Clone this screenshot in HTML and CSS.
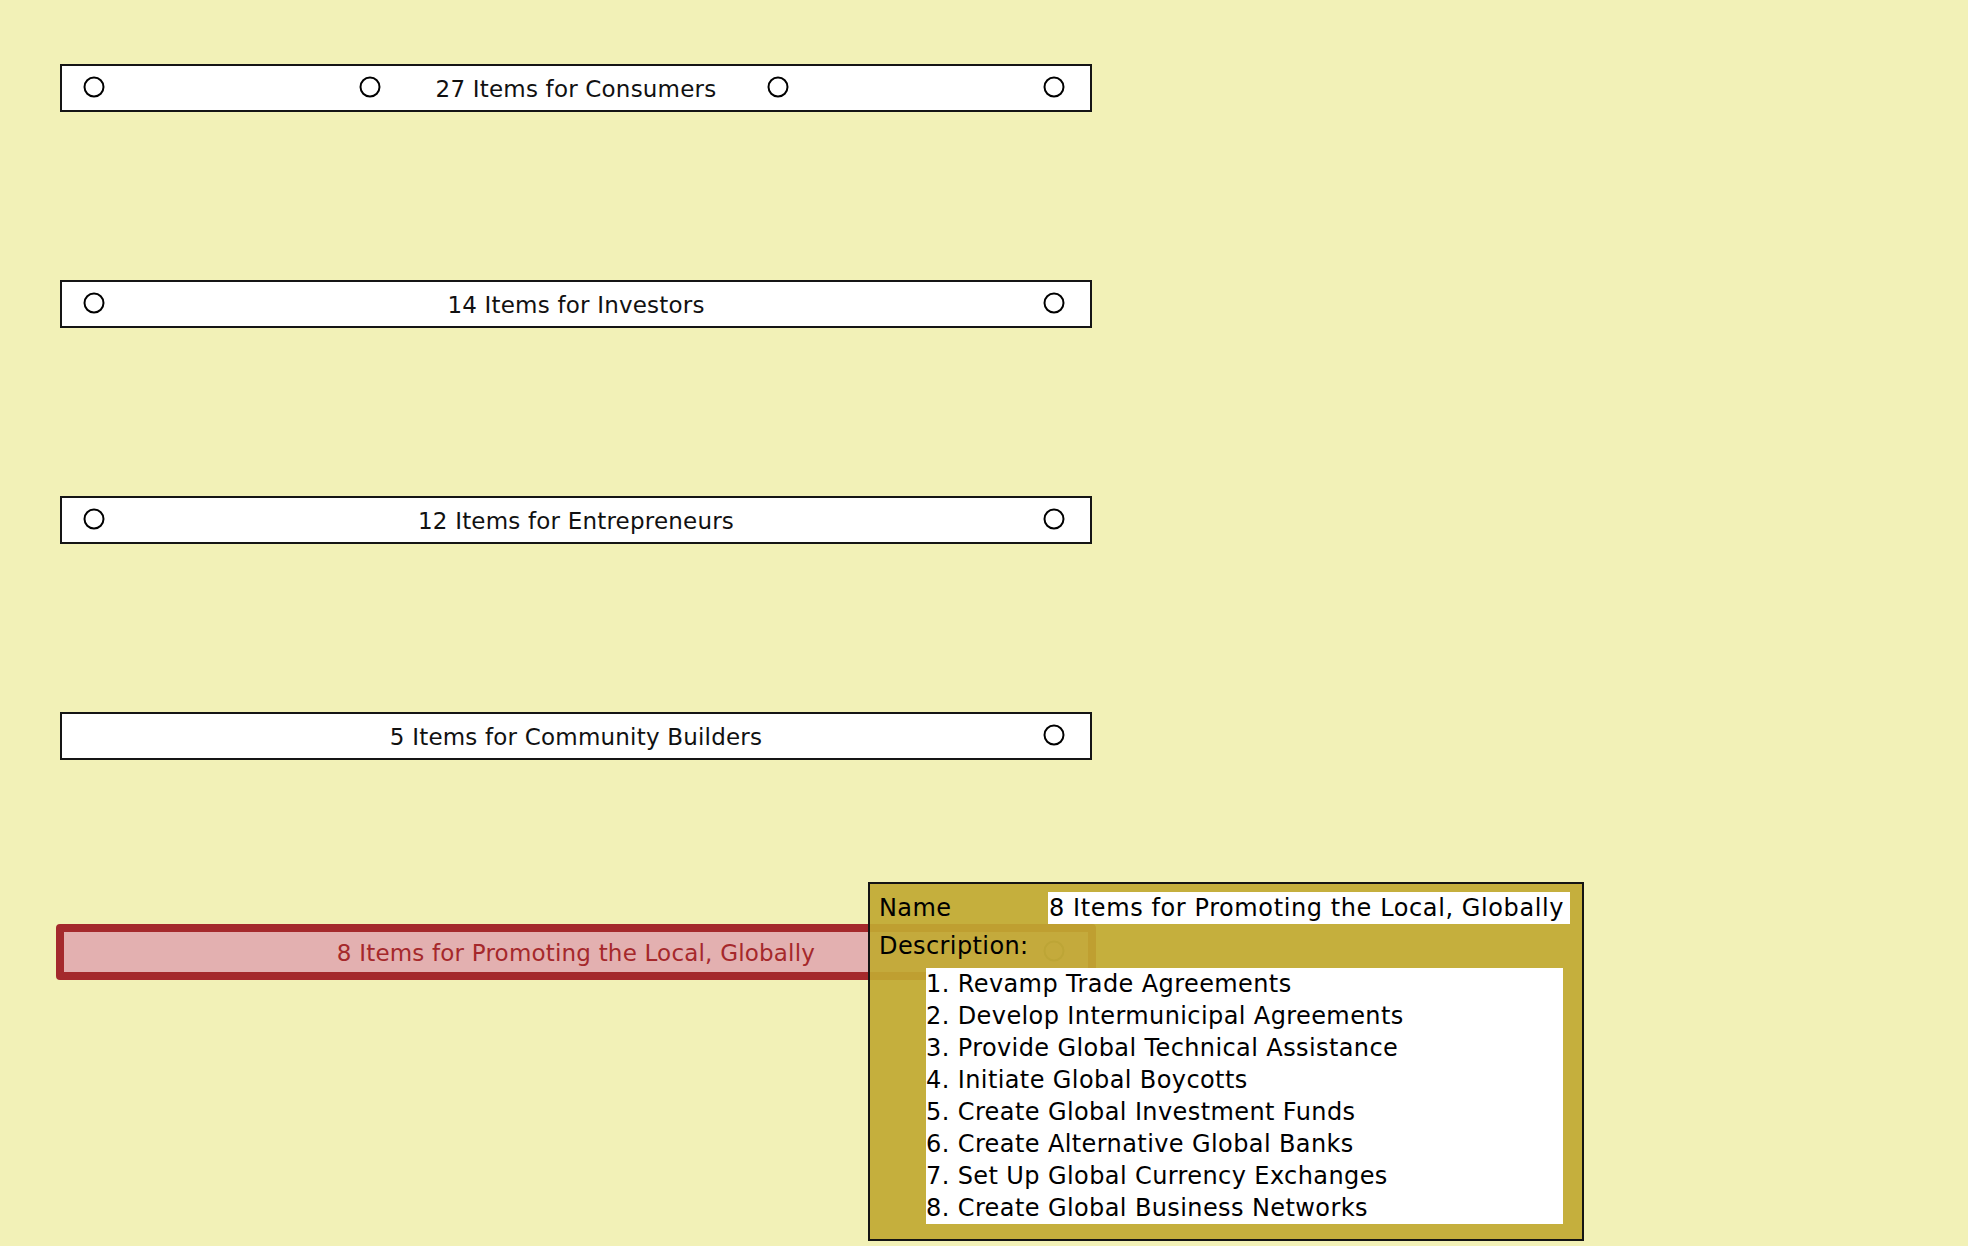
FILE: index.html
```html
<!DOCTYPE HTML>
<html lang="en">
<head>
	<meta charset="utf-8" />
	<title>Items</title>
	<link rel="stylesheet" href="styles.css">
</head>

<body>

	<div id="canvas">
		<div class="node">
			<span class="port port_a"></span>
			<span class="port port_b"></span>
			<span class="label">27 Items for Consumers</span>
			<span class="port port_c"></span>
			<span class="port port_d"></span>
		</div>

		<div class="node">
			<span class="port port_a"></span>
			<span class="label">14 Items for Investors</span>
			<span class="port port_d"></span>
		</div>

		<div class="node">
			<span class="port port_a"></span>
			<span class="label">12 Items for Entrepreneurs</span>
			<span class="port port_d"></span>
		</div>

		<div class="node">
			<span class="label">5 Items for Community Builders</span>
			<span class="port port_d"></span>
		</div>

		<div class="node selected">
			<span class="label">8 Items for Promoting the Local, Globally</span>
			<span class="port port_d"></span>
		</div>
	</div>

	<!-- okno edycji zaznaczonego elementu -->
	<div id="editor">
		<div class="editor_row">
			<span class="editor_label">Name</span>
			<div class="editor_field">8 Items for Promoting the Local, Globally</div>
		</div>
		<div class="editor_label description_label">Description:</div>
		<div class="editor_text">
			<div>1. Revamp Trade Agreements</div>
			<div>2. Develop Intermunicipal Agreements</div>
			<div>3. Provide Global Technical Assistance</div>
			<div>4. Initiate Global Boycotts</div>
			<div>5. Create Global Investment Funds</div>
			<div>6. Create Alternative Global Banks</div>
			<div>7. Set Up Global Currency Exchanges</div>
			<div>8. Create Global Business Networks</div>
		</div>
	</div>

</body>
</html>
```

FILE: styles.css
```css
body{
	margin: 0;
	background-color: #f2f1b7;
	font-family: "DejaVu Sans", "Liberation Sans", sans-serif;
	color: #111;
}

#canvas{
	display: flex;
	flex-direction: column;
	align-items: flex-start;
	gap: 168px;
	padding: 64px 0 0 60px;
}
	.node{
		position: relative;
		box-sizing: border-box;
		width: 1032px;
		height: 48px;
		padding-top: 2px;
		border: 2px solid #151515;
		background-color: #fff;
		display: flex;
		align-items: center;
		justify-content: center;
		font-size: 23px;
		letter-spacing: 0.2px;
	}

	.node.selected{
		width: 1040px;
		height: 56px;
		margin: -4px 0 0 -4px;
		border: 8px solid #a4292c;
		border-radius: 4px;
		background-color: #e3b0b0;
		color: #a5282b;
	}

	.port{
		position: absolute;
		top: calc(50% - 1px);
		box-sizing: border-box;
		width: 21px;
		height: 21px;
		border: 2px solid #000;
		border-radius: 50%;
		transform: translate(-50%, -50%);
	}

	.port_a{ left: 32px; }
	.port_b{ left: 308px; }
	.port_c{ left: 716px; }
	.port_d{ left: 992px; }

	.selected .port{ border-color: #8a6f63; }
	.selected .port_d{ left: 990px; }

#editor{
	position: absolute;
	left: 868px;
	top: 882px;
	box-sizing: border-box;
	width: 716px;
	height: 359px;
	padding: 8px 12px 15px 9px;
	border: 2px solid #141414;
	background-color: rgba(193, 169, 50, 0.92);
	font-size: 24px;
	line-height: 32px;
	letter-spacing: 0.4px;
	color: #000;
}
	.editor_row{
		display: grid;
		grid-template-columns: 169px 1fr;
		height: 32px;
	}

	.editor_field{
		background-color: #fff;
		padding-left: 1px;
		white-space: nowrap;
		letter-spacing: 0.6px;
	}

	.description_label{
		margin-top: 6px;
		height: 32px;
	}

	.editor_text{
		margin: 6px 0 0 47px;
		width: 637px;
		height: 256px;
		background-color: #fff;
		white-space: nowrap;
	}
```
